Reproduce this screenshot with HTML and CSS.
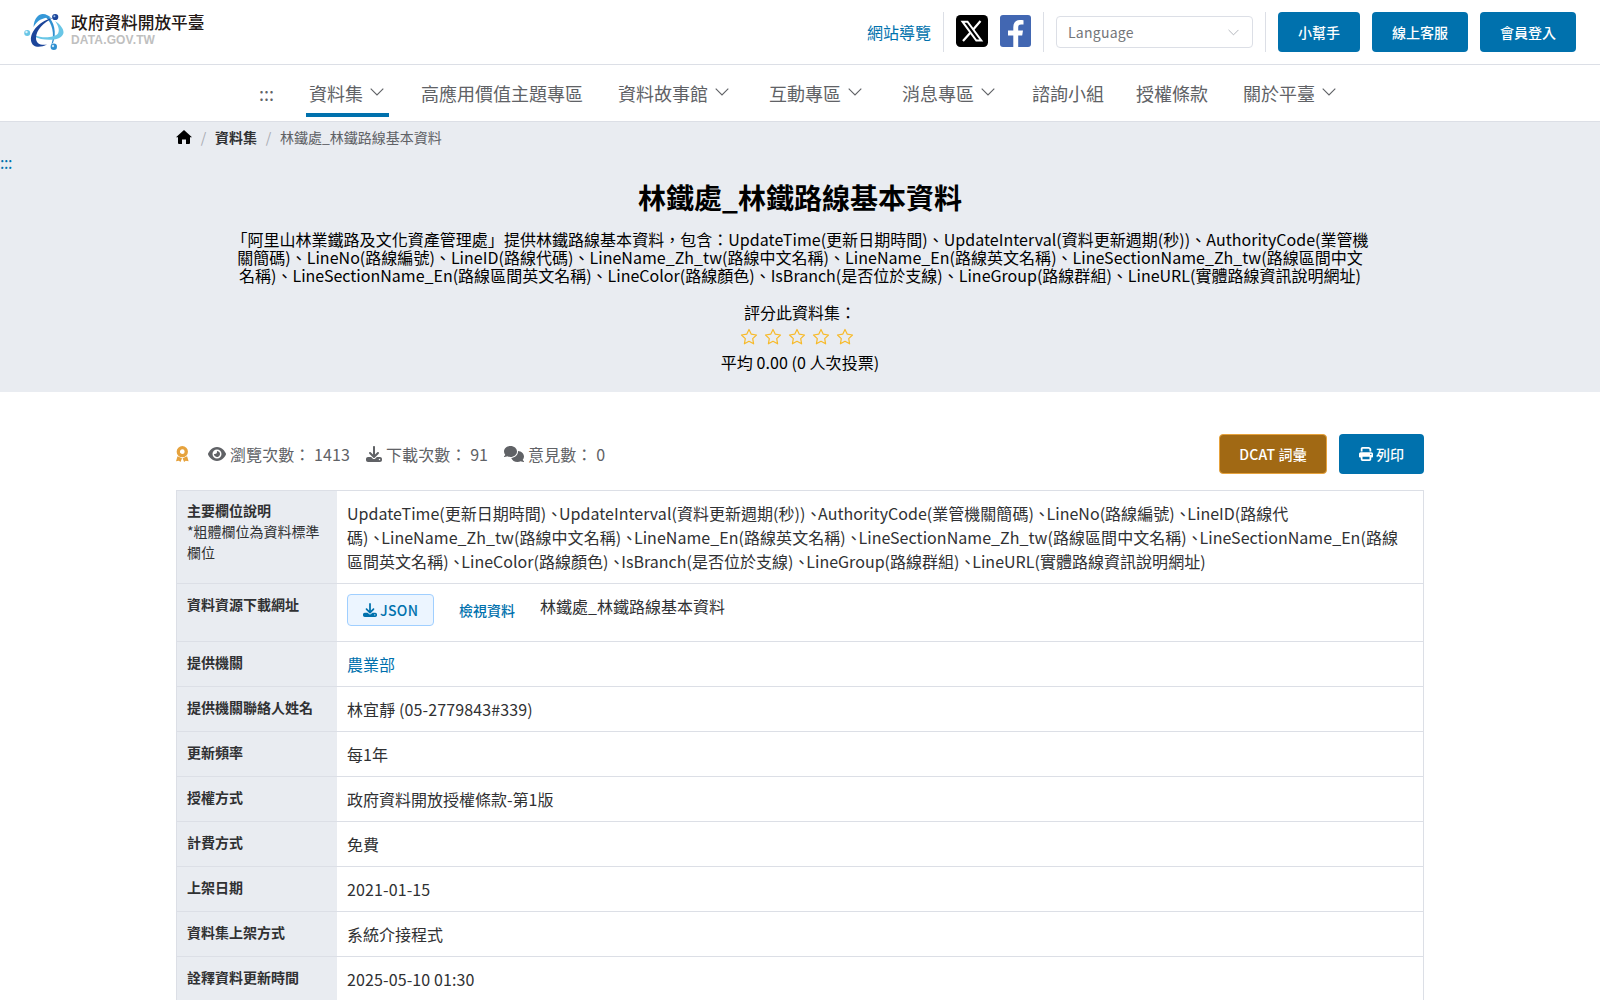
FILE: index.html
```html
<!DOCTYPE html>
<html lang="zh-Hant-TW">
<head>
<meta charset="utf-8">
<title>林鐵處_林鐵路線基本資料 | 政府資料開放平臺</title>
<link rel="stylesheet" href="styles.css">
</head>
<body>
<svg class="sprite" aria-hidden="true">
  <symbol id="chevron" viewBox="0 0 14 8"><path d="M.7.7 7 7 13.3.7" fill="none" stroke="currentColor" stroke-width="1.100"/></symbol>
  <symbol id="download" viewBox="0 0 512 512"><path d="M288 32c0-17.700-14.300-32-32-32s-32 14.300-32 32V274.700l-73.400-73.400c-12.500-12.500-32.800-12.500-45.300 0s-12.500 32.800 0 45.300l128 128c12.500 12.500 32.800 12.500 45.300 0l128-128c12.500-12.500 12.500-32.800 0-45.300s-32.800-12.500-45.300 0L288 274.700V32zM64 352c-35.300 0-64 28.700-64 64v32c0 35.300 28.700 64 64 64H448c35.300 0 64-28.700 64-64V416c0-35.300-28.700-64-64-64H346.500l-45.300 45.300c-25 25-65.500 25-90.500 0L165.500 352H64zm368 56a24 24 0 1 1 0 48 24 24 0 1 1 0-48z"/></symbol>
  <symbol id="star" viewBox="0 0 18 18"><path d="M9 1.500 11.300 6.200 16.500 7 12.700 10.600 13.600 15.800 9 13.300 4.400 15.800 5.300 10.600 1.500 7 6.700 6.200Z" fill="none" stroke="currentColor" stroke-width="1.200" stroke-linejoin="round"/></symbol>
</svg>

<header class="topbar">
  <a class="logo">
    <svg class="logo-mark" width="42" height="38" viewBox="0 0 42 38">
      <path d="M9.500 14C10 5 15 .8 19 1C22 1.200 25 2.500 27 5C21 4 14 6 9.500 14Z" fill="#3598d8"/>
      <path d="M24 3.500C30 8 33 20 29 30L27.500 31C31 21 28 10 22 4.500Z" fill="#2f8fd0"/>
      <path d="M31 8C36 11 40 16 39.500 20C38 28 20 29 9.500 23L10 22C18 25.500 30 25 34 20.500C36 17 34 12 31 8Z" fill="#69c6e6"/>
      <path d="M29 5C17 7 6 18 7 27.500C8 35 16 35 23 31.500C17 32.500 12 31 12 25C12 17 20 9 29 5Z" fill="#1c459a"/>
      <circle cx="31.200" cy="4" r="3.100" fill="#1c459a"/><circle cx="30.400" cy="3.200" r="1" fill="#9cc4ea"/>
      <circle cx="3.200" cy="20" r="3" fill="#69c6e6"/><circle cx="2.500" cy="19" r="1.200" fill="#dff3fb"/>
      <circle cx="29.800" cy="33.800" r="3.200" fill="#2f8fd0"/><circle cx="29" cy="33" r="1.200" fill="#c4e4f7"/>
    </svg>
    <span class="logo-text"><b>政府資料開放平臺</b><small>DATA.GOV.TW</small></span>
  </a>
  <div class="tools">
    <a class="sitemap">網站導覽</a>
    <span class="social">
      <svg width="32" height="32" viewBox="0 0 32 32"><rect width="32" height="32" rx="4.500"/><path d="M6.500 6.700h5l13.800 18.800h-5Z" fill="none" stroke="#fff" stroke-width="2"/><path d="M24.500 6 17 14.700M14.300 17.700 7 26" stroke="#fff" stroke-width="2.200"/></svg>
      <svg width="31" height="32" viewBox="0 0 31 32"><rect width="31" height="32" rx="3" fill="#4267b2"/><path d="M13.300 32V20.500H8v-5h5.300v-3.300C13.300 7.500 15.900 5 19.800 5c1.500 0 2.800.1 3.700.3v4.200h-2.400c-2.300 0-2.900 1.100-2.900 2.800v3.200h4.800l-.8 5h-4V32Z" fill="#fff"/></svg>
    </span>
    <span class="lang-box"><span class="lang">Language<svg width="11" height="7"><use href="#chevron"/></svg></span></span>
    <a class="btn">小幫手</a><a class="btn">線上客服</a><a class="btn">會員登入</a>
  </div>
</header>

<nav class="nav">
  <a class="anchor">:::</a>
  <a class="item active">資料集<svg><use href="#chevron"/></svg></a>
  <a class="item">高應用價值主題專區</a>
  <a class="item far">資料故事館<svg><use href="#chevron"/></svg></a>
  <a class="item far">互動專區<svg><use href="#chevron"/></svg></a>
  <a class="item">消息專區<svg><use href="#chevron"/></svg></a>
  <a class="item near">諮詢小組</a>
  <a class="item">授權條款</a>
  <a class="item">關於平臺<svg><use href="#chevron"/></svg></a>
</nav>

<section class="hero">
  <div class="crumbs">
    <svg width="16" height="14" viewBox="0 0 16 14"><path d="M8 0 16 7.200H14V13q0 1-1 1H10V9.500H6V14H3q-1 0-1-1V7.200H0Z"/></svg>
    <i>/</i><b>資料集</b><i>/</i><span>林鐵處_林鐵路線基本資料</span>
  </div>
  <a class="main-anchor">:::</a>
  <h1>林鐵處_林鐵路線基本資料</h1>
  <div class="desc">
    <p>「阿里山林業鐵路及文化資產管理處」提供林鐵路線基本資料，包含：UpdateTime(更新日期時間)、UpdateInterval(資料更新週期(秒))、AuthorityCode(業管機</p>
    <p>關簡碼)、LineNo(路線編號)、LineID(路線代碼)、LineName_Zh_tw(路線中文名稱)、LineName_En(路線英文名稱)、LineSectionName_Zh_tw(路線區間中文</p>
    <p class="last">名稱)、LineSectionName_En(路線區間英文名稱)、LineColor(路線顏色)、IsBranch(是否位於支線)、LineGroup(路線群組)、LineURL(實體路線資訊說明網址)</p>
  </div>
  <div class="rate">評分此資料集：</div>
  <div class="stars"><svg><use href="#star"/></svg><svg><use href="#star"/></svg><svg><use href="#star"/></svg><svg><use href="#star"/></svg><svg><use href="#star"/></svg></div>
  <div class="avg">平均 0.00 (0 人次投票)</div>
</section>

<main class="content">
  <div class="stats">
    <svg class="medal" width="13" height="16" viewBox="0 0 13 16"><circle cx="6.300" cy="5.700" r="4" fill="none" stroke="currentColor" stroke-width="3.300"/><path d="M1.500 10.200 6 12.200 4.500 16 2.900 14.700 0 15.200ZM11.100 10.200 6.600 12.200 8.100 16 9.700 14.700 12.600 15.200Z" fill="currentColor"/></svg>
    <span class="stat"><svg width="18" height="16" viewBox="0 0 576 512"><path d="M288 32c-80.800 0-145.500 36.800-192.600 80.600C48.600 156 17.300 208 2.500 243.700c-3.300 7.900-3.300 16.700 0 24.600C17.300 304 48.600 356 95.400 399.400C142.500 443.200 207.200 480 288 480s145.500-36.800 192.600-80.600c46.800-43.500 78.100-95.400 93-131.100c3.300-7.900 3.300-16.700 0-24.600c-14.900-35.700-46.200-87.700-93-131.100C433.500 68.800 368.800 32 288 32zM144 256a144 144 0 1 1 288 0 144 144 0 1 1 -288 0zm144-64c0 35.300-28.700 64-64 64c-7.100 0-13.900-1.200-20.300-3.300c-5.500-1.800-11.900 1.600-11.700 7.400c.3 6.900 1.300 13.800 3.200 20.700c13.700 51.200 66.400 81.600 117.600 67.900s81.600-66.400 67.900-117.600c-11.100-41.500-47.800-69.400-88.600-71.100c-5.800-.2-9.200 6.100-7.400 11.700c2.100 6.400 3.300 13.200 3.300 20.300z"/></svg>瀏覽次數： 1413</span>
    <span class="stat"><svg width="16" height="16"><use href="#download"/></svg>下載次數： 91</span>
    <span class="stat"><svg width="20" height="16" viewBox="0 0 640 512"><path d="M208 352c114.900 0 208-78.800 208-176S322.900 0 208 0S0 78.800 0 176c0 38.600 14.700 74.300 39.600 103.400c-3.500 9.400-8.700 17.700-14.200 24.700c-4.800 6.200-9.700 11-13.300 14.300c-1.800 1.600-3.300 2.900-4.300 3.700c-.5 .4-.9 .7-1.100 .8l-.2 .2C1 327.200-1.400 334.400 .8 340.900S9.100 352 16 352c21.800 0 43.800-5.600 62.100-12.500c9.200-3.500 17.800-7.400 25.200-11.400C134.100 343.300 169.800 352 208 352zM448 176c0 112.300-99.100 196.900-216.500 207C255.800 457.400 336.400 512 432 512c38.200 0 73.900-8.700 104.700-23.900c7.500 4 16 7.900 25.200 11.400c18.300 6.900 40.300 12.500 62.100 12.500c6.900 0 13.100-4.500 15.200-11.100c2.100-6.600-.2-13.800-5.800-17.900l-.2-.2c-.2-.2-.6-.4-1.100-.8c-1-.8-2.500-2-4.300-3.700c-3.600-3.300-8.500-8.100-13.300-14.300c-5.500-7-10.700-15.400-14.200-24.700c24.900-29 39.600-64.700 39.600-103.400c0-92.800-84.900-168.900-192.600-175.500c.4 5.100 .6 10.300 .6 15.500z"/></svg>意見數： 0</span>
    <span class="actions">
      <a class="btn dcat">DCAT 詞彙</a>
      <a class="btn"><svg width="14" height="14" viewBox="0 0 512 512"><path fill="currentColor" d="M128 0C92.700 0 64 28.700 64 64v96h64V64H354.700L384 93.300V160h64V93.300c0-17-6.700-33.300-18.700-45.300L400 18.700C388 6.700 371.700 0 354.700 0H128zM384 352v32 64H128V384 368 352H384zm64 32h32c17.700 0 32-14.300 32-32V256c0-35.300-28.700-64-64-64H64c-35.300 0-64 28.700-64 64v96c0 17.700 14.300 32 32 32H64v64c0 35.300 28.700 64 64 64H384c35.300 0 64-28.700 64-64V384zM432 248a24 24 0 1 1 0 48 24 24 0 1 1 0-48z"/></svg>列印</a>
    </span>
  </div>

  <div class="table">
    <div class="row fields"><div class="th">主要欄位說明<small>*粗體欄位為資料標準欄位</small></div><div class="td"><p>UpdateTime(更新日期時間)<s>、</s>UpdateInterval(資料更新週期(秒))<s>、</s>AuthorityCode(業管機關簡碼)<s>、</s>LineNo(路線編號)<s>、</s>LineID(路線代</p><p class="middle">碼)<s>、</s>LineName_Zh_tw(路線中文名稱)<s>、</s>LineName_En(路線英文名稱)<s>、</s>LineSectionName_Zh_tw(路線區間中文名稱)<s>、</s>LineSectionName_En(路線</p><p>區間英文名稱)<s>、</s>LineColor(路線顏色)<s>、</s>IsBranch(是否位於支線)<s>、</s>LineGroup(路線群組)<s>、</s>LineURL(實體路線資訊說明網址)</p></div></div>
    <div class="row files"><div class="th">資料資源下載網址</div><div class="td"><a class="json"><svg width="14" height="14"><use href="#download"/></svg>JSON</a><a class="view">檢視資料</a><span>林鐵處_林鐵路線基本資料</span></div></div>
    <div class="row"><div class="th">提供機關</div><div class="td"><a class="link">農業部</a></div></div>
    <div class="row"><div class="th">提供機關聯絡人姓名</div><div class="td num">林宜靜 (05-2779843#339)</div></div>
    <div class="row"><div class="th">更新頻率</div><div class="td">每1年</div></div>
    <div class="row"><div class="th">授權方式</div><div class="td">政府資料開放授權條款-第1版</div></div>
    <div class="row"><div class="th">計費方式</div><div class="td">免費</div></div>
    <div class="row"><div class="th">上架日期</div><div class="td num">2021-01-15</div></div>
    <div class="row"><div class="th">資料集上架方式</div><div class="td">系統介接程式</div></div>
    <div class="row"><div class="th">詮釋資料更新時間</div><div class="td num">2025-05-10 01:30</div></div>
  </div>
</main>
</body>
</html>
```
FILE: styles.css
```css
* { box-sizing: border-box; }
html, body { height: 1000px; overflow: hidden; }
body {
  margin: 0;
  background: #fff;
  color: #000;
  font: 16px/24px "Noto Sans CJK TC", sans-serif;
}
.sprite { display: none; }
svg { flex: none; }
p { margin: 0; }

.topbar {
  display: flex;
  justify-content: space-between;
  height: 65px;
  padding: 12px 24px;
  border-bottom: 1px solid #dcdfe6;
}
.logo { display: flex; gap: 5px; padding-top: 1px; }
.logo-text { display: flex; flex-direction: column; }
.logo-text b { font-size: 16.700px; font-weight: 500; line-height: 19px; color: #231815; }
.logo-text small { font: bold 12px/16px "Liberation Sans", sans-serif; letter-spacing: .15px; color: #bfbfbf; }
.tools { display: flex; align-items: center; gap: 12px; height: 40px; }
.sitemap, .link { color: #0071ad; }
.social { display: flex; gap: 12px; height: 40px; padding: 3px 12px 0; border: solid #dcdfe6; border-width: 0 1px; }
.lang-box { height: 40px; padding: 4px 12px 0 0; border-right: 1px solid #dcdfe6; }
.lang {
  display: flex;
  align-items: center;
  justify-content: space-between;
  width: 197px;
  height: 32px;
  padding: 0 13px 0 11px;
  border: 1px solid #dcdfe6;
  border-radius: 4px;
  font-size: 14px;
  letter-spacing: .25px;
  color: #73767a;
}
.lang svg { color: #a8abb2; }
.btn {
  display: inline-flex;
  align-items: center;
  gap: 3px;
  height: 40px;
  padding: 0 20px;
  border-radius: 4px;
  background: #0071ad;
  color: #fff;
  font-size: 14px;
  font-weight: 500;
}

.nav {
  display: flex;
  height: 57px;
  padding-left: 259px;
  border-bottom: 1px solid #dcdfe6;
  font-size: 18px;
  color: #606266;
}
.nav a { display: flex; align-items: center; height: 52px; padding: 4px 0 0; white-space: nowrap; }
.nav .anchor { width: 47px; }
.nav .item { margin-right: 29px; padding: 8px 3px 0; border-bottom: 4px solid transparent; }
.nav .item svg { width: 14px; height: 8px; margin: -2px 2px 0 7px; }
.nav .active { border-color: #0071ad; }
.nav .far { margin-right: 32px; }
.nav .near { margin-right: 26px; }

.hero { height: 270px; background: #e9ecf1; text-align: center; }
.crumbs { display: flex; align-items: center; height: 30px; padding-left: 176px; font-size: 14px; color: #606266; }
.crumbs i { width: 23px; font-style: normal; color: #a8abb2; }
.crumbs b { color: #303133; }
.main-anchor { display: block; height: 24px; line-height: 21px; letter-spacing: -.45px; text-align: left; color: #0071ad; }
h1 { margin: 0; font-size: 28px; line-height: 42px; }
.desc { margin-top: 12px; line-height: 18px; letter-spacing: .03px; white-space: nowrap; }
.desc .last { letter-spacing: .01px; }
.rate { margin-top: 16px; }
.stars { display: flex; justify-content: center; gap: 6px; height: 26px; padding-right: 6px; align-items: center; }
.stars svg { width: 18px; height: 18px; color: #f7ba2a; }
.avg { letter-spacing: .06px; }

.content { width: 1248px; margin: 42px auto 0; }
.stats { display: flex; align-items: center; height: 40px; margin-bottom: 16px; color: #606266; }
.stats svg { fill: currentColor; }
.medal { margin-right: 19px; color: #e6a23c; }
.stat { display: flex; align-items: center; gap: 4px; margin-right: 16px; letter-spacing: .09px; }
.actions { display: flex; gap: 12px; margin-left: auto; }
.dcat { padding: 0 19px; border: 1px solid #e6a23c; background: #a16914; letter-spacing: .2px; }

.table { border: 1px solid #dcdfe6; color: #303133; }
.row { display: flex; height: 45px; border-bottom: 1px solid #dcdfe6; }
.th { width: 160px; flex: none; padding: 10px; background: #e9ecf1; font-size: 14px; font-weight: 700; line-height: 21px; }
.th small { display: block; font-size: 14px; font-weight: 400; }
.td { padding: 10px; white-space: nowrap; }
.td s { display: inline-block; width: 12.700px; text-decoration: none; }
.num { letter-spacing: .12px; }
.fields { height: 93px; }
.fields .th { padding-top: 9px; }
.fields p { letter-spacing: .025px; }
.fields .middle { letter-spacing: .05px; }
.files { height: 58px; }
.files .td { display: flex; }
.json {
  display: flex;
  align-items: center;
  gap: 3px;
  width: 87px;
  height: 32px;
  padding: 0 15px;
  border: 1px solid #a0cfff;
  border-radius: 4px;
  background: #ecf5ff;
  letter-spacing: .3px;
}
.json svg { fill: currentColor; }
.json, .view { font-size: 14px; font-weight: 500; color: #0071ad; }
.view { width: 106px; padding: 4px 25px 0; }
```
